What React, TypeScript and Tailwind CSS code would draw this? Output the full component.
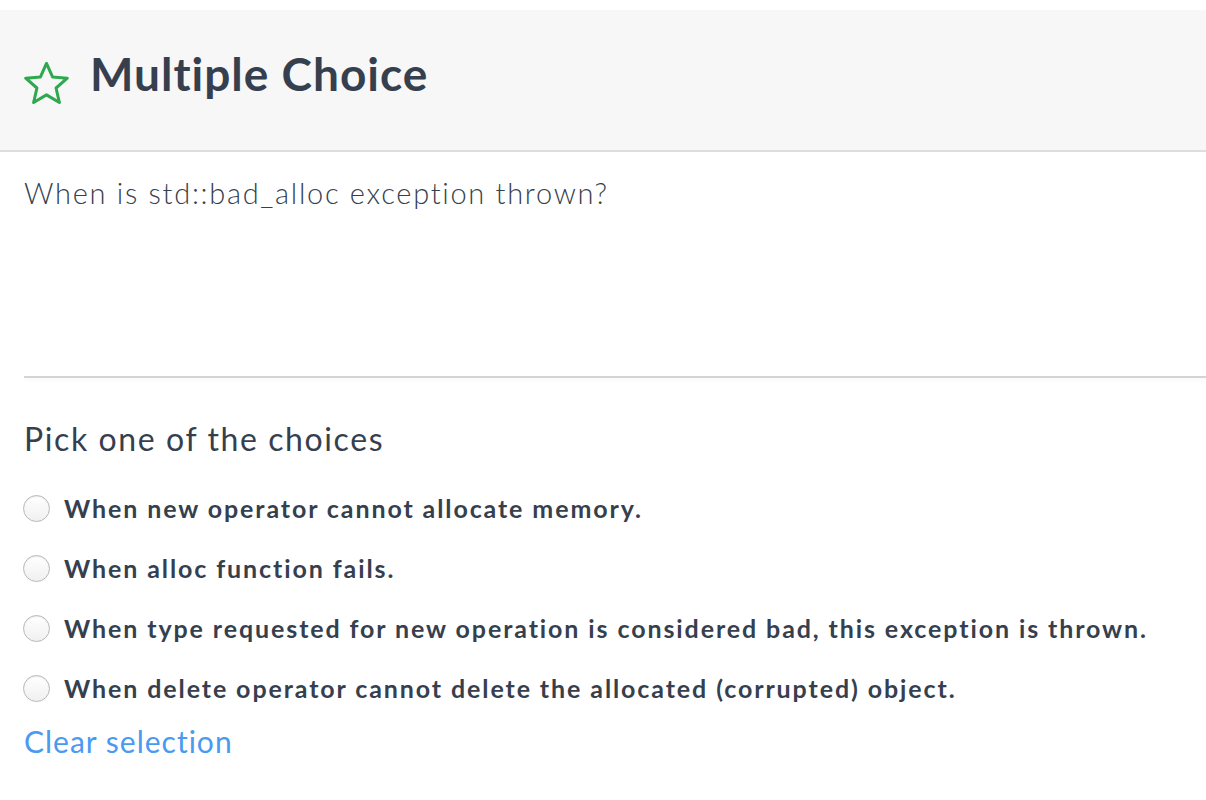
import React from "react";

const options = [
  "When new operator cannot allocate memory.",
  "When alloc function fails.",
  "When type requested for new operation is considered bad, this exception is thrown.",
  "When delete operator cannot delete the allocated (corrupted) object.",
];

export default function App() {
  return (
    <div className="w-[1206px] h-[800px] bg-white pt-[10px] overflow-hidden font-['Lato',sans-serif] text-[#363f4e]">
      {/* Header */}
      <div className="h-[142px] bg-[#f7f7f7] border-b-2 border-[#dedede] flex items-start pt-[36px] pl-[24px] gap-[21px]">
        <svg className="mt-[16px] shrink-0" width="45" height="42" viewBox="1.3 1.8 21.4 20.2" fill="none" stroke="#2fa84f" strokeWidth="1.45" strokeLinejoin="round">
          <polygon points="12,2.5 14.9,9 22,9.6 16.6,14.3 18.2,21.3 12,17.6 5.8,21.3 7.4,14.3 2,9.6 9.1,9" />
        </svg>
        <h1 className="text-[46px] font-bold tracking-[1px] leading-[56px]">Multiple Choice</h1>
      </div>

      {/* Question */}
      <div className="pl-[24px]">
        <div className="h-[224px] pt-[21px]">
          <p className="text-[29px] font-light leading-[40px] tracking-[1.7px]">When is std::bad_alloc exception thrown?</p>
        </div>
        <div className="h-[2px] bg-[#d4d4d4] shadow-[0_2px_4px_rgba(0,0,0,0.05)]" />

        <p className="mt-[41px] text-[32px] leading-[40px] tracking-[1.6px]">Pick one of the choices</p>

        <ul className="mt-[35px] flex flex-col gap-[32px]">
          {options.map((o) => (
            <li key={o} className="flex items-center h-[28px]">
              <span className="shrink-0 w-[27px] h-[27px] rounded-full border border-[#b8b8b8] bg-gradient-to-b from-white to-[#f0f0f0] shadow-[inset_0_1px_1px_rgba(0,0,0,0.08)] mr-[14px] -ml-[1px]" />
              <span className="text-[25px] font-bold leading-[28px] tracking-[1.9px] whitespace-nowrap">{o}</span>
            </li>
          ))}
        </ul>

        <p className="mt-[19px] text-[30px] leading-[40px] tracking-[1px] text-[#4a9af0]">Clear selection</p>
      </div>
    </div>
  );
}
